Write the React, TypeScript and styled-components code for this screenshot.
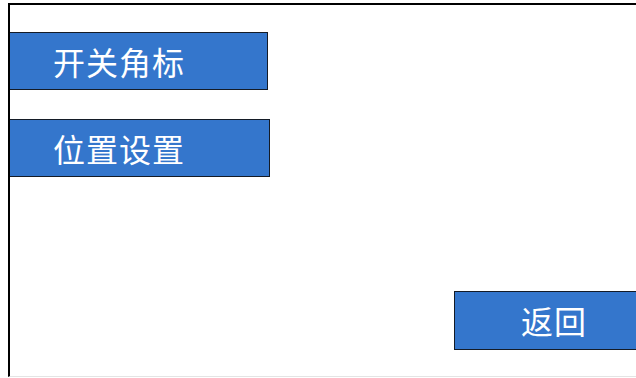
import styled, { createGlobalStyle } from "styled-components";

const GlobalStyle = createGlobalStyle`
  html, body {
    margin: 0;
    padding: 0;
    background: #ffffff;
    overflow: hidden;
  }
  body {
    font-family: "Noto Sans CJK SC", "Noto Sans", sans-serif;
  }
`;

const Screen = styled.div`
  width: 636px;
  height: 378px;
  padding-top: 3px;
  padding-left: 8px;
  box-sizing: border-box;
  overflow: hidden;
`;

const Frame = styled.div`
  height: 374px;
  box-sizing: border-box;
  border-top: 2px solid #000;
  border-left: 2px solid #000;
  border-bottom: 1px solid #e4e4e4;
  display: flex;
  flex-direction: column;
  padding-top: 27px;
`;

const Menu = styled.div`
  display: flex;
  flex-direction: column;
  gap: 29px;
`;

const MenuButton = styled.div<{ $width: number }>`
  width: ${(p) => p.$width}px;
  height: 58px;
  box-sizing: border-box;
  background: #3476cc;
  border: 1.5px solid #141b26;
  border-left: none;
  color: #ffffff;
  font-size: 32px;
  font-weight: 400;
  line-height: 56px;
  padding-left: 43px;
  letter-spacing: 1px;
`;

const BackButton = styled.div`
  align-self: flex-end;
  margin-top: auto;
  margin-bottom: 26px;
  margin-right: -18px;
  width: 200px;
  height: 59px;
  box-sizing: border-box;
  background: #3476cc;
  border: 1.5px solid #141b26;
  color: #ffffff;
  font-size: 32px;
  line-height: 56px;
  text-align: center;
  letter-spacing: 1px;
`;

export default function App() {
  return (
    <>
      <GlobalStyle />
      <Screen>
        <Frame>
          <Menu>
            <MenuButton $width={258}>开关角标</MenuButton>
            <MenuButton $width={260}>位置设置</MenuButton>
          </Menu>
          <BackButton>返回</BackButton>
        </Frame>
      </Screen>
    </>
  );
}
